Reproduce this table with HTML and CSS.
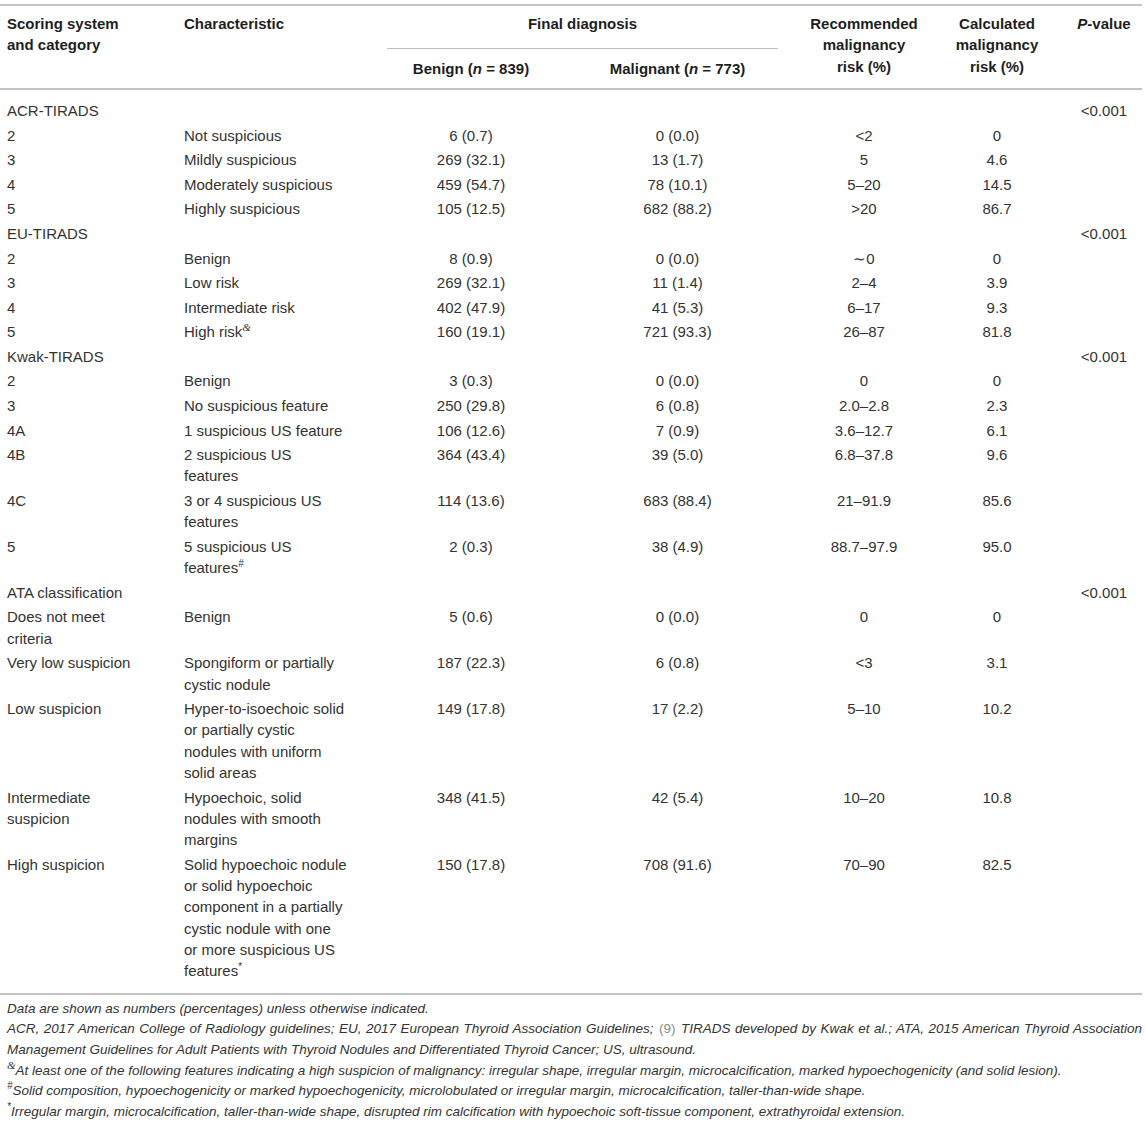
FILE: index.html
```html
<!DOCTYPE html>
<html lang="en">
<head>
  <meta charset="UTF-8">
  <title>Scoring systems and malignancy risk</title>
  <link rel="stylesheet" href="styles.css">
</head>
<body>
  <div class="table-wrap">
    <table class="data">
      <colgroup>
        <col class="c1">
        <col class="c2">
        <col class="c3">
        <col class="c4">
        <col class="c5">
        <col class="c6">
        <col class="c7">
      </colgroup>
      <thead>
        <tr>
          <th rowspan="2" class="left">Scoring system<br>and category</th>
          <th rowspan="2" class="left">Characteristic</th>
          <th colspan="2" class="group"><div class="group-label">Final diagnosis</div></th>
          <th rowspan="2">Recommended<br>malignancy<br>risk (%)</th>
          <th rowspan="2">Calculated<br>malignancy<br>risk (%)</th>
          <th rowspan="2"><i>P</i>-value</th>
        </tr>
        <tr class="sub">
          <th>Benign (<i>n</i> = 839)</th>
          <th>Malignant (<i>n</i> = 773)</th>
        </tr>
      </thead>
      <tbody>
        <tr class="first">
          <td class="left">ACR-TIRADS</td><td class="left"></td><td></td><td></td><td></td><td></td><td>&lt;0.001</td>
        </tr>
        <tr>
          <td class="left">2</td><td class="left">Not suspicious</td><td>6 (0.7)</td><td>0 (0.0)</td><td>&lt;2</td><td>0</td><td></td>
        </tr>
        <tr>
          <td class="left">3</td><td class="left">Mildly suspicious</td><td>269 (32.1)</td><td>13 (1.7)</td><td>5</td><td>4.6</td><td></td>
        </tr>
        <tr>
          <td class="left">4</td><td class="left">Moderately suspicious</td><td>459 (54.7)</td><td>78 (10.1)</td><td>5–20</td><td>14.5</td><td></td>
        </tr>
        <tr>
          <td class="left">5</td><td class="left">Highly suspicious</td><td>105 (12.5)</td><td>682 (88.2)</td><td>&gt;20</td><td>86.7</td><td></td>
        </tr>

        <tr>
          <td class="left">EU-TIRADS</td><td class="left"></td><td></td><td></td><td></td><td></td><td>&lt;0.001</td>
        </tr>
        <tr>
          <td class="left">2</td><td class="left">Benign</td><td>8 (0.9)</td><td>0 (0.0)</td><td>∼0</td><td>0</td><td></td>
        </tr>
        <tr>
          <td class="left">3</td><td class="left">Low risk</td><td>269 (32.1)</td><td>11 (1.4)</td><td>2–4</td><td>3.9</td><td></td>
        </tr>
        <tr>
          <td class="left">4</td><td class="left">Intermediate risk</td><td>402 (47.9)</td><td>41 (5.3)</td><td>6–17</td><td>9.3</td><td></td>
        </tr>
        <tr>
          <td class="left">5</td><td class="left">High risk<sup class="amp">&amp;</sup></td><td>160 (19.1)</td><td>721 (93.3)</td><td>26–87</td><td>81.8</td><td></td>
        </tr>

        <tr>
          <td class="left">Kwak-TIRADS</td><td class="left"></td><td></td><td></td><td></td><td></td><td>&lt;0.001</td>
        </tr>
        <tr>
          <td class="left">2</td><td class="left">Benign</td><td>3 (0.3)</td><td>0 (0.0)</td><td>0</td><td>0</td><td></td>
        </tr>
        <tr>
          <td class="left">3</td><td class="left">No suspicious feature</td><td>250 (29.8)</td><td>6 (0.8)</td><td>2.0–2.8</td><td>2.3</td><td></td>
        </tr>
        <tr>
          <td class="left">4A</td><td class="left">1 suspicious US feature</td><td>106 (12.6)</td><td>7 (0.9)</td><td>3.6–12.7</td><td>6.1</td><td></td>
        </tr>
        <tr>
          <td class="left">4B</td><td class="left">2 suspicious US<br>features</td><td>364 (43.4)</td><td>39 (5.0)</td><td>6.8–37.8</td><td>9.6</td><td></td>
        </tr>
        <tr>
          <td class="left">4C</td><td class="left">3 or 4 suspicious US<br>features</td><td>114 (13.6)</td><td>683 (88.4)</td><td>21–91.9</td><td>85.6</td><td></td>
        </tr>
        <tr>
          <td class="left">5</td><td class="left">5 suspicious US<br>features<sup>#</sup></td><td>2 (0.3)</td><td>38 (4.9)</td><td>88.7–97.9</td><td>95.0</td><td></td>
        </tr>

        <tr>
          <td class="left">ATA classification</td><td class="left"></td><td></td><td></td><td></td><td></td><td>&lt;0.001</td>
        </tr>
        <tr>
          <td class="left">Does not meet<br>criteria</td><td class="left">Benign</td><td>5 (0.6)</td><td>0 (0.0)</td><td>0</td><td>0</td><td></td>
        </tr>
        <tr>
          <td class="left">Very low suspicion</td><td class="left">Spongiform or partially<br>cystic nodule</td><td>187 (22.3)</td><td>6 (0.8)</td><td>&lt;3</td><td>3.1</td><td></td>
        </tr>
        <tr>
          <td class="left">Low suspicion</td><td class="left">Hyper-to-isoechoic solid<br>or partially cystic<br>nodules with uniform<br>solid areas</td><td>149 (17.8)</td><td>17 (2.2)</td><td>5–10</td><td>10.2</td><td></td>
        </tr>
        <tr>
          <td class="left">Intermediate<br>suspicion</td><td class="left">Hypoechoic, solid<br>nodules with smooth<br>margins</td><td>348 (41.5)</td><td>42 (5.4)</td><td>10–20</td><td>10.8</td><td></td>
        </tr>
        <tr class="last">
          <td class="left">High suspicion</td><td class="left">Solid hypoechoic nodule<br>or solid hypoechoic<br>component in a partially<br>cystic nodule with one<br>or more suspicious US<br>features<sup>*</sup></td><td>150 (17.8)</td><td>708 (91.6)</td><td>70–90</td><td>82.5</td><td></td>
        </tr>
      </tbody>
    </table>

    <div class="notes">
      <p>Data are shown as numbers (percentages) unless otherwise indicated.</p>
      <p>ACR, 2017 American College of Radiology guidelines; EU, 2017 European Thyroid Association Guidelines; <span class="ref">(9)</span> TIRADS developed by Kwak et al.; ATA, 2015 American Thyroid Association Management Guidelines for Adult Patients with Thyroid Nodules and Differentiated Thyroid Cancer; US, ultrasound.</p>
      <p><sup class="amp">&amp;</sup>At least one of the following features indicating a high suspicion of malignancy: irregular shape, irregular margin, microcalcification, marked hypoechogenicity (and solid lesion).</p>
      <p><sup>#</sup>Solid composition, hypoechogenicity or marked hypoechogenicity, microlobulated or irregular margin, microcalcification, taller-than-wide shape.</p>
      <p><sup>*</sup>Irregular margin, microcalcification, taller-than-wide shape, disrupted rim calcification with hypoechoic soft-tissue component, extrathyroidal extension.</p>
    </div>
  </div>
</body>
</html>
```

FILE: styles.css
```css
body {
  margin: 0;
  background: #ffffff;
  font-family: "Liberation Sans", Arial, sans-serif;
  color: #333333;
}
.table-wrap {
  width: 1142px;
  padding-top: 4px;
}
.data {
  width: 1142px;
  table-layout: fixed;
  border-collapse: collapse;
  font-size: 15px;
  line-height: 21.3px;
}
.c1 { width: 177px; }
.c2 { width: 210px; }
.c3 { width: 168px; }
.c4 { width: 245px; }
.c5 { width: 128px; }
.c6 { width: 138px; }
.c7 { width: 76px; }

.data thead {
  border-top: 2px solid #c4c4c4;
  border-bottom: 2px solid #c4c4c4;
}
.data th {
  font-weight: bold;
  color: #1e1e1e;
  text-align: center;
  vertical-align: top;
  padding: 7px 0 0 0;
}
.data th.left {
  text-align: left;
  padding-left: 7px;
}
.data th.group {
  padding-bottom: 0;
}
.group-label {
  margin-right: 22px;
  padding-bottom: 14px;
  border-bottom: 1px solid #bdbdbd;
}
.data tr.sub th {
  padding: 9px 0 8px 0;
}

.data td {
  text-align: center;
  vertical-align: top;
  padding: 1.65px 0;
  white-space: nowrap;
}
.data td.left {
  text-align: left;
  padding-left: 7px;
}
.data tr.first td {
  padding-top: 10.5px;
}
.data tr.last td {
  padding-bottom: 11.5px;
}
.data tbody {
  border-bottom: 2px solid #c4c4c4;
}

sup {
  font-size: 10px;
  line-height: 0;
  vertical-align: 6px;
}
sup.amp {
  font-family: "Liberation Serif", serif;
  font-style: italic;
  font-size: 11px;
}

.notes {
  padding: 3.5px 0 0 7px;
  font-size: 13.5px;
  line-height: 20.7px;
  font-style: italic;
  color: #333333;
  text-align: justify;
}
.notes p {
  margin: 0;
}
.notes .ref {
  color: #8a8a8a;
  font-style: normal;
  padding: 0 1px;
}
```
